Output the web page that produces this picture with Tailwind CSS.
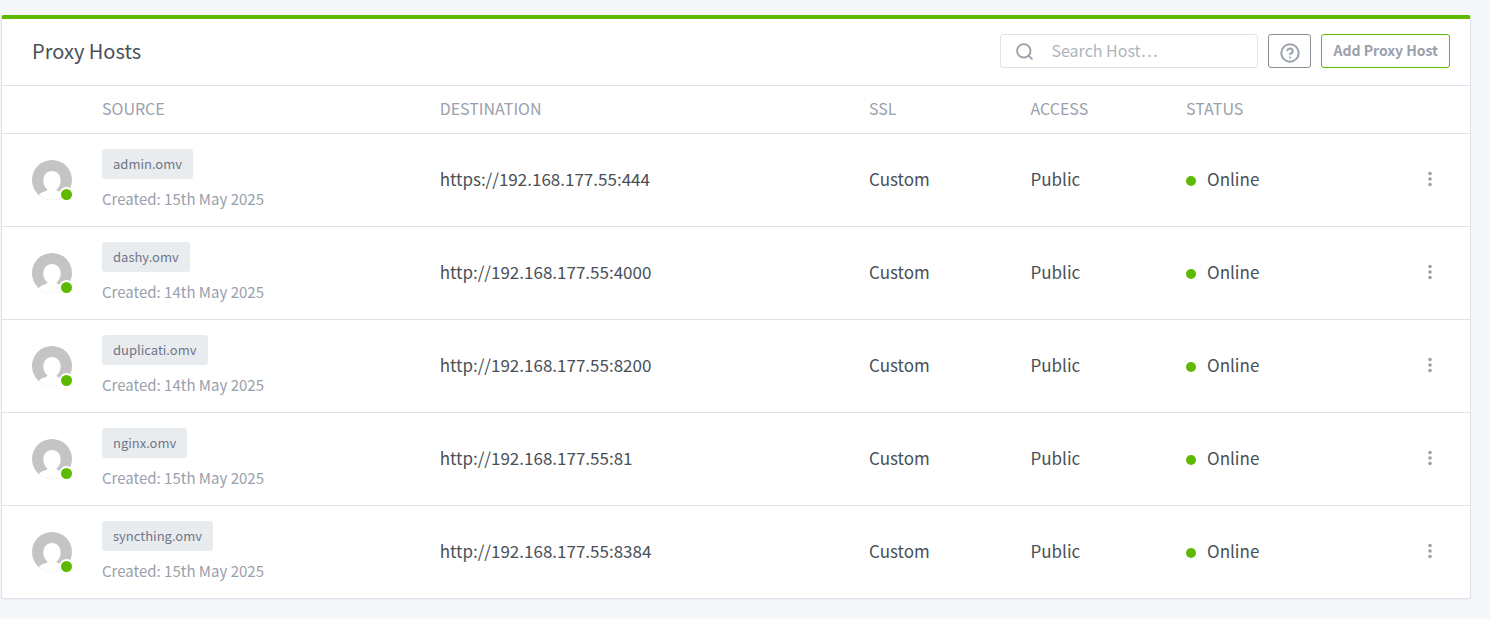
<!DOCTYPE html>
<html lang="en">

<head>
  <meta charset="UTF-8">
  <meta name="viewport" content="width=device-width, initial-scale=1">
  <title>Proxy Hosts</title>
  <script src="https://cdn.jsdelivr.net/npm/@tailwindcss/browser@4"></script>
</head>

<body class="bg-[#f5f7fb] text-[#495057] font-['Noto_Sans_CJK_SC','Open_Sans',sans-serif] text-[17px] leading-6 min-h-screen">

  <main class="pt-[15px] pl-px pr-[19px] pb-5">
    <section class="bg-white rounded-[3px] border border-t-4 border-[#dfe4ed] border-t-[#5eba00] shadow-[0_1px_2px_rgba(0,0,0,0.05)]">

      <header class="flex items-center justify-between h-[67px] pl-[30px] pr-5 pb-0.5 border-b border-[#dfe2e9]">
        <h1 class="text-xl leading-6">Proxy Hosts</h1>
        <div class="flex items-center gap-2.5">
          <form class="relative" role="search">
            <label for="search" aria-label="Search hosts" class="absolute left-4 top-[9px] text-[#9aa0ac]">
              <svg class="size-[17px]" viewBox="0 0 24 24" fill="none" stroke="currentColor" stroke-width="2.6" stroke-linecap="round" stroke-linejoin="round">
                <circle cx="11" cy="11" r="9.500"></circle>
                <path d="M22.500 22.500l-4.800-4.800"></path>
              </svg>
            </label>
            <input id="search" type="text" placeholder="Search Host…"
              class="block w-[258px] h-[34px] pl-[50px] pr-3 pb-[3px] border border-[#dfe2ee] rounded-[3px] text-base leading-6 placeholder:text-[#adb5bd] focus:outline-none focus:border-[#1991eb]">
          </form>
          <button type="button" aria-label="Help"
            class="flex items-center justify-center w-[43px] h-[34px] pt-[3px] border border-[#868e96] rounded-[3px] text-[#9aa0ac]">
            <svg class="size-[22px]" viewBox="0 0 24 24" fill="none" stroke="currentColor" stroke-width="2.2" stroke-linecap="round" stroke-linejoin="round">
              <circle cx="12" cy="12" r="9.500"></circle>
              <path d="M9.09 9a3 3 0 0 1 5.83 1c0 2-3 3-3 3"></path>
              <path d="M12 17v.01"></path>
            </svg>
          </button>
          <button type="button"
            class="h-[34px] px-[11px] pb-[3px] border border-[#5eba00] rounded-[3px] text-sm font-bold text-[#9aa0ac]">Add Proxy Host</button>
        </div>
      </header>

      <table class="w-full table-fixed text-left">
        <thead>
          <tr class="h-[47px] border-b border-[#dee2e6] text-base text-[#9aa0ac] uppercase">
            <th class="w-[85px]" aria-label="Owner"></th>
            <th class="w-[23%] px-[15px] pb-0.5 font-normal">Source</th>
            <th class="w-[29.25%] px-[15px] pb-0.5 font-normal">Destination</th>
            <th class="w-[11%] px-[15px] pb-0.5 font-normal">SSL</th>
            <th class="w-[10.6%] px-[15px] pb-0.5 font-normal">Access</th>
            <th class="px-[15px] pb-0.5 font-normal">Status</th>
            <th class="w-[85px]" aria-label="Actions"></th>
          </tr>
        </thead>
        <tbody id="hosts"></tbody>
      </table>
    </section>
  </main>

  <template id="row">
    <tr class="h-[93px] border-b border-[#dee2e6] last:border-b-0">
      <td class="pl-[30px]">
        <div class="relative size-10">
          <svg class="size-10" viewBox="0 0 40 40">
            <defs>
              <clipPath id="round"><circle cx="20" cy="20" r="20"></circle></clipPath>
            </defs>
            <g clip-path="url(#round)">
              <rect width="40" height="40" fill="#c4c4c4"></rect>
              <path fill="#fff" d="M20 11c-5 0-8.700 4-8.700 9.500 0 4 1.700 7 4 8.700.4 1.200-.8 1.800-3 2.300C9.500 32.300 7.500 33.700 6 36v5h28v-5c-1.500-2.300-3.500-3.700-6.300-4.500-2.200-.5-3.400-1.100-3-2.300 2.300-1.700 4-4.700 4-8.700C28.700 15 25 11 20 11z"></path>
            </g>
          </svg>
          <span class="absolute -right-0.5 -bottom-0.5 size-[15px] rounded-full border-2 border-white bg-[#5eba00]"></span>
        </div>
      </td>
      <td class="px-[15px]">
        <a href="#" data-field="source" class="inline-block h-[30px] px-[11px] rounded-[3px] bg-[#e9ecef] text-[13px] leading-[30px] text-[#6e7687]"></a>
        <div data-field="created" class="mt-2 text-[15px] leading-6 text-[#9aa0ac]"></div>
      </td>
      <td class="px-[15px] pb-0.5" data-field="destination"></td>
      <td class="px-[15px] pb-0.5">Custom</td>
      <td class="px-[15px] pb-0.5">Public</td>
      <td class="px-[15px] pb-0.5">
        <div class="flex items-center">
          <span class="size-2.5 mt-1 mr-[11px] rounded-full bg-[#5eba00]"></span>Online
        </div>
      </td>
      <td class="pr-[30px] pb-0.5">
        <button type="button" aria-label="Host actions" class="flex justify-center w-5 ml-auto text-[#9aa0ac]">
          <svg class="w-1 h-4" viewBox="0 0 4 16" fill="currentColor">
            <circle cx="2" cy="2.500" r="1.800"></circle>
            <circle cx="2" cy="8" r="1.800"></circle>
            <circle cx="2" cy="13.500" r="1.800"></circle>
          </svg>
        </button>
      </td>
    </tr>
  </template>

  <script>
    const hosts = [
      { source: 'admin.omv', created: '15th May 2025', destination: 'https://192.168.177.55:444' },
      { source: 'dashy.omv', created: '14th May 2025', destination: 'http://192.168.177.55:4000' },
      { source: 'duplicati.omv', created: '14th May 2025', destination: 'http://192.168.177.55:8200' },
      { source: 'nginx.omv', created: '15th May 2025', destination: 'http://192.168.177.55:81' },
      { source: 'syncthing.omv', created: '15th May 2025', destination: 'http://192.168.177.55:8384' }
    ];

    const template = document.getElementById('row');
    const tbody = document.getElementById('hosts');

    hosts.forEach((host) => {
      const row = template.content.cloneNode(true);
      const link = row.querySelector('[data-field="source"]');
      link.textContent = host.source;
      link.href = 'http://' + host.source;
      row.querySelector('[data-field="created"]').textContent = 'Created: ' + host.created;
      row.querySelector('[data-field="destination"]').textContent = host.destination;
      tbody.appendChild(row);
    });
  </script>
</body>

</html>
